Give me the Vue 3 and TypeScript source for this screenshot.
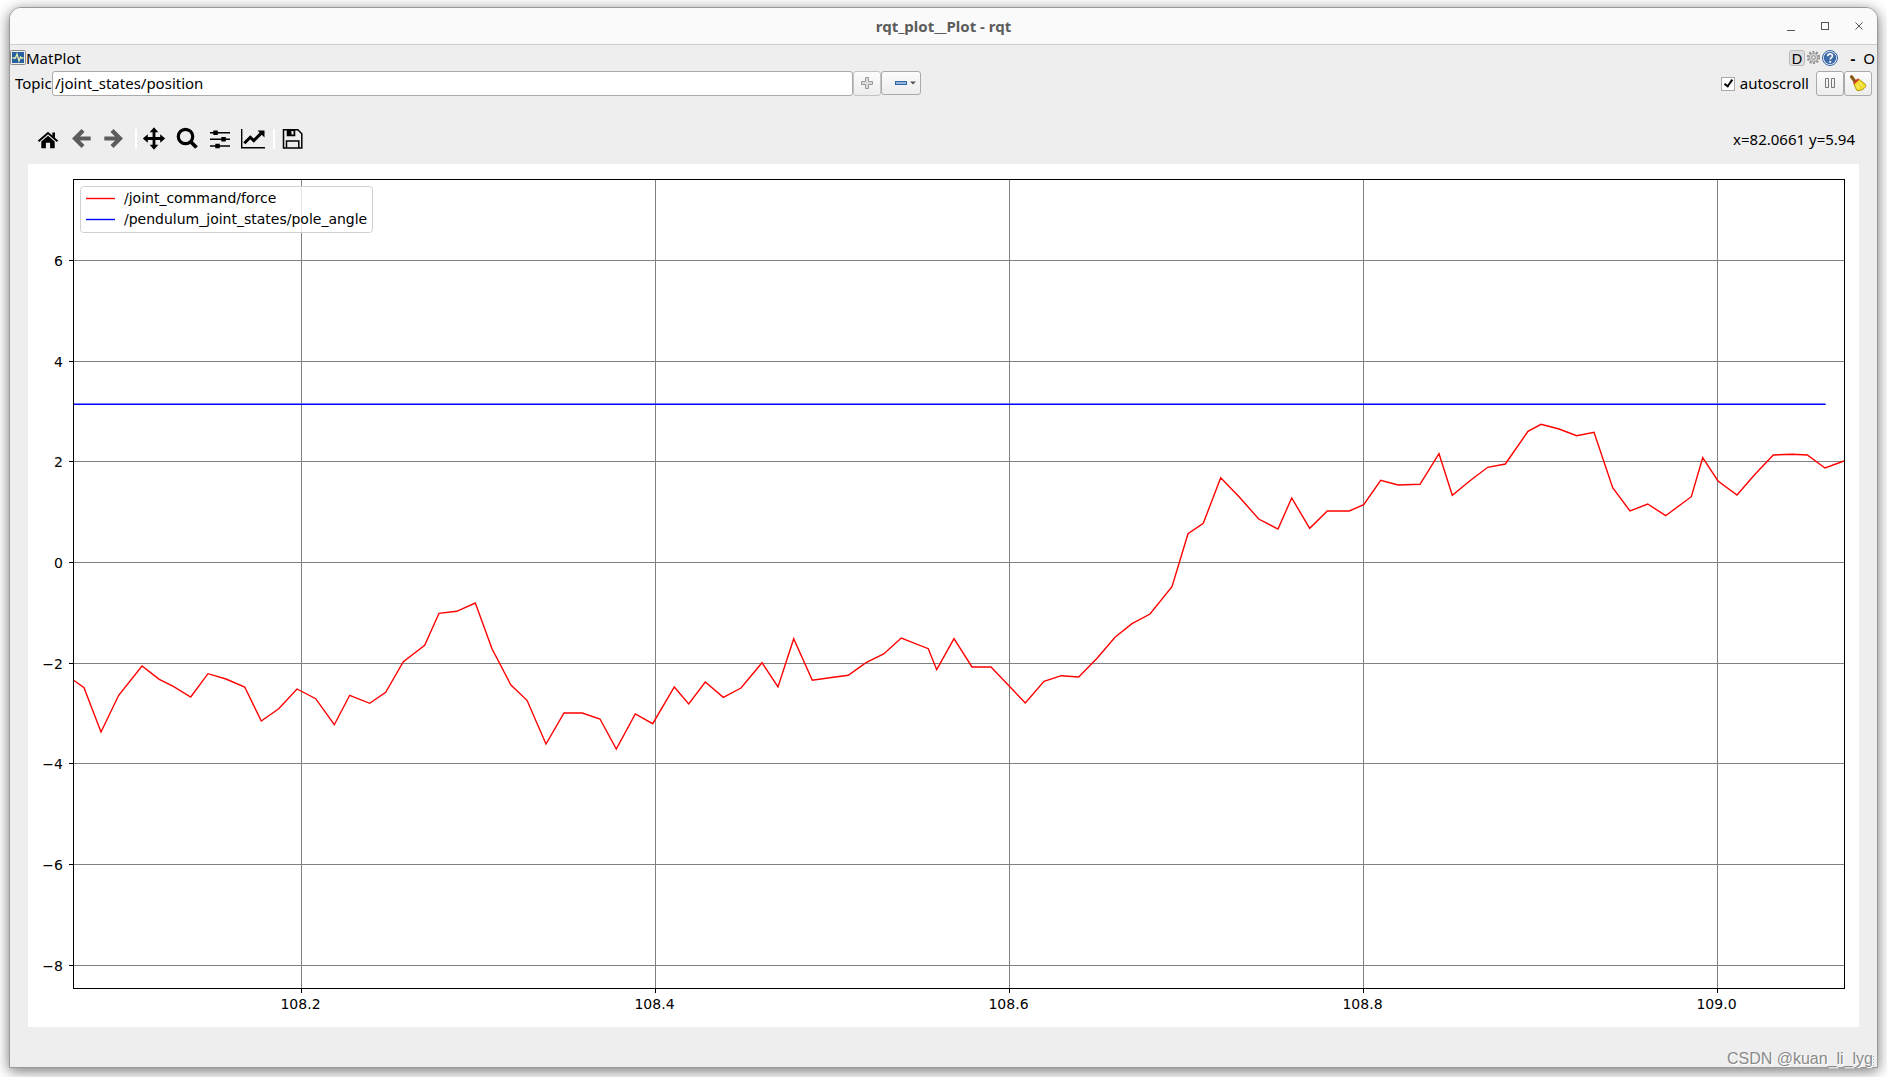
<script setup lang="ts">
import { ref } from 'vue'

interface Tick {
  label: string
  at: number
}

const topic = ref('/joint_states/position')
const autoscroll = ref(true)

const xTicks: Tick[] = ['108.2', '108.4', '108.6', '108.8', '109.0'].map((label, i) => ({
  label,
  at: 273.5 + i * 354,
}))

const yTicks: Tick[] = [
  { label: '6', at: 96.5 },
  { label: '4', at: 197.5 },
  { label: '2', at: 297.5 },
  { label: '0', at: 398.5 },
  { label: '−2', at: 499.5 },
  { label: '−4', at: 599.5 },
  { label: '−6', at: 700.5 },
  { label: '−8', at: 801.5 },
]

const force: [number, number][] = [
  [45.7, 516.3], [56, 523.7], [73, 568], [90.7, 531.3], [114, 502], [131.3, 515.3],
  [145.3, 522.3], [162.7, 533], [180, 509.7], [198, 515], [216.7, 523], [233.3, 557],
  [250.7, 544.7], [269, 525], [287.7, 534.7], [306.3, 560.7], [321.7, 531.3], [341.7, 539.3],
  [357.7, 528.3], [375.3, 497.7], [396.7, 481.3], [411, 449.3], [428.7, 447.3], [447.3, 439],
  [464, 484.7], [482.7, 520.7], [499, 536.3], [518, 580], [536, 549], [554.3, 549],
  [572, 555], [588.3, 585], [607.3, 550], [624.7, 559.7], [646.3, 523], [660.7, 540],
  [677.3, 518], [695.3, 533.3], [713, 524], [734, 498.7], [750, 523], [765.7, 474.7],
  [784.3, 516.3], [805.3, 513.3], [820.3, 511.3], [838, 498.7], [855.7, 490], [873.3, 474],
  [900.3, 484.7], [908.7, 505.7], [926, 474.7], [944, 503], [963, 503], [997.3, 539],
  [1016, 517.3], [1033.3, 511.7], [1050.7, 513], [1069.3, 494], [1087, 473.3], [1104, 459.7],
  [1122, 450], [1144, 422.7], [1160, 369.7], [1175.3, 359.3], [1192.7, 313.7], [1211.3, 333],
  [1230.7, 355], [1250, 365], [1263.7, 334], [1281.7, 364.3], [1299.3, 347], [1321.3, 347],
  [1335.7, 340.7], [1352.7, 316.3], [1370, 321], [1392, 320.3], [1411, 289.7], [1424.3, 331.3],
  [1442, 316.7], [1459.7, 303.3], [1477.3, 300], [1500, 267.3], [1513, 260.3], [1531, 265],
  [1548.7, 271.7], [1566, 268.3], [1584.7, 323.7], [1602, 347], [1619.7, 340], [1637.7, 351.7],
  [1663.3, 332.7], [1674.7, 293.7], [1690, 317], [1709, 331], [1727, 310.3], [1745.3, 291],
  [1764, 290.3], [1779.3, 291], [1797, 304], [1816, 297],
]
const forcePoints = force.map((p) => p.join(',')).join(' ')
</script>

<template>
  <div class="desktop">
    <main class="window">
      <header class="titlebar">
        <h1>rqt_plot__Plot - rqt</h1>
        <div class="window-buttons">
          <button type="button" aria-label="Minimize">
            <svg width="28" height="28"><path d="M10 18.5h8" /></svg>
          </button>
          <button type="button" aria-label="Maximize">
            <svg width="28" height="28"><rect x="10.5" y="10.5" width="7" height="7" /></svg>
          </button>
          <button type="button" aria-label="Close">
            <svg width="28" height="28"><path d="M10.500 10.500l7 7m0-7l-7 7" /></svg>
          </button>
        </div>
      </header>

      <div class="dock-title">
        <svg class="dock-icon" width="16" height="16">
          <rect x="0.500" y="0.500" width="15" height="14" rx="1" fill="#eee" stroke="#8a8a8a" />
          <rect x="2" y="2" width="12" height="11" fill="#27609e" />
          <path d="M2.500 8h3l1.500-4 2 7 1.500-4 1 1h2" fill="none" stroke="#e8f0b0" stroke-width="1.300" />
        </svg>
        <span>MatPlot</span>
        <div class="dock-actions">
          <button type="button" class="dock-d">D</button>
          <button type="button" class="dock-gear" aria-label="Configure">
            <svg width="15" height="16">
              <circle cx="7.500" cy="7.500" r="5.700" fill="none" stroke="#888" stroke-width="1.800" stroke-dasharray="2 1.580" />
              <circle cx="7.500" cy="7.500" r="4.300" fill="#d2d2d0" stroke="#999" />
              <circle cx="7.500" cy="7.500" r="1.800" fill="#eee" stroke="#888" />
            </svg>
          </button>
          <button type="button" class="dock-help" aria-label="Help">
            <svg width="16" height="16">
              <circle cx="8" cy="8" r="7.500" fill="#f4f7fb" stroke="#3465a4" />
              <circle cx="8" cy="8" r="6.200" fill="#3d6cab" />
              <path d="M5.700 6.200c0-3.200 4.800-3 4.700-.2 0 1.500-2.200 1.700-2.200 3.600" fill="none" stroke="#fff" stroke-width="1.700" />
              <circle cx="8.200" cy="11.800" r="1.100" fill="#fff" />
            </svg>
          </button>
          <button type="button" class="dock-min">-</button>
          <button type="button" class="dock-float">O</button>
        </div>
      </div>

      <div class="topic-row">
        <label class="topic-label" for="topic">Topic</label>
        <input id="topic" v-model="topic" class="topic-input" type="text" />
        <button type="button" class="tool faded" aria-label="Add topic">
          <svg width="26" height="23">
            <path d="M11.500 5.500h3v4h4v3h-4v4h-3v-4h-4v-3h4z" fill="#dcdcda" stroke="#999" />
          </svg>
        </button>
        <button type="button" class="tool remove" aria-label="Remove topic">
          <svg width="38" height="22">
            <rect x="13.500" y="9.500" width="11" height="3" fill="#8fb5dd" stroke="#3465a4" />
            <path d="M28 9.500h6l-3 3z" fill="#555" />
          </svg>
        </button>
        <label class="autoscroll">
          <input v-model="autoscroll" type="checkbox" />
          <span>autoscroll</span>
        </label>
        <button type="button" class="tool" aria-label="Pause">
          <svg width="26" height="23">
            <path d="M8.500 6.500h3v9h-3zM14.500 6.500h3v9h-3z" fill="#f4f4f4" stroke="#777" />
          </svg>
        </button>
        <button type="button" class="tool" aria-label="Clear plot">
          <svg width="26" height="23">
            <path d="M6.500 4.800l3 4" stroke="#8a5a14" stroke-width="3.200" stroke-linecap="round" />
            <path d="M9 11l5.500-3.500 6 5c.6 1.200 0 2.800-1.500 4-2 1.800-4.500 2.300-7 2-1.500-2-2.500-4.500-3-7.500z" fill="#f1dc2c" stroke="#b39a0c" />
            <path d="M14.500 10.500l3 4M12 12.500l1.500 4" stroke="#fff7a0" fill="none" />
            <path d="M8.500 11.500l5-4.500" stroke="#d23b24" stroke-width="1.800" />
          </svg>
        </button>
      </div>

      <div class="plot-toolbar">
        <button type="button" aria-label="Home">
          <svg width="33" height="33">
            <path d="M6.500 19.200L16 11l9.500 8.200" fill="none" stroke="#000" stroke-width="2" />
            <path d="M9.300 19.500L16 13.700l6.700 5.800v6.700h-4.600v-5.400h-4.200v5.400H9.300zM20.300 10.500h2.700v5.500l-2.700-2.300z" />
          </svg>
        </button>
        <button type="button" aria-label="Back">
          <svg width="33" height="33">
            <path d="M18 8.500l-8 8 8 8M11 16.500h14.700" fill="none" stroke="#5c5c5c" stroke-width="4.200" />
          </svg>
        </button>
        <button type="button" aria-label="Forward">
          <svg width="33" height="33">
            <path d="M14 8.500l8 8-8 8M21 16.500H6.300" fill="none" stroke="#5c5c5c" stroke-width="4.200" />
          </svg>
        </button>
        <i class="separator"></i>
        <button type="button" aria-label="Pan">
          <svg width="33" height="33">
            <path d="M17 8v17M8.500 16.500h17" stroke="#000" stroke-width="2.800" />
            <path d="M17 5.300l4.300 5h-8.600zM17 27.700l4.300-5h-8.600zM5.800 16.500l5-4.300v8.600zM28.200 16.500l-5-4.300v8.600z" />
          </svg>
        </button>
        <button type="button" aria-label="Zoom">
          <svg width="33" height="33">
            <circle cx="15.500" cy="14.500" r="7.200" fill="none" stroke="#000" stroke-width="3.200" />
            <path d="M20.500 19.500l6 6" stroke="#000" stroke-width="3.800" />
          </svg>
        </button>
        <button type="button" aria-label="Configure subplots">
          <svg width="33" height="33">
            <path d="M7 10.700h20M7 17.300h20M7 24h20" stroke="#000" stroke-width="1.600" />
            <path d="M10.300 8.500h4.500v4.500h-4.500zM18.300 15h4.500v4.500h-4.500zM12.300 21.700h4.500v4.500h-4.500z" />
          </svg>
        </button>
        <button type="button" aria-label="Edit axes">
          <svg width="33" height="33">
            <path d="M5.700 7v18.700H29" fill="none" stroke="#000" stroke-width="1.400" />
            <path d="M8.300 21.300l6-6 3.500 3.300 8-8" fill="none" stroke="#000" stroke-width="3" />
            <path d="M21.500 8.500h7v7z" />
          </svg>
        </button>
        <i class="separator"></i>
        <button type="button" aria-label="Save">
          <svg width="33" height="33">
            <path d="M8.500 7.700h14.300l4 4v14.200H8.500zM11.500 26v-7h12.300v7" fill="none" stroke="#000" stroke-width="1.500" />
            <path d="M11.700 7.500h8.600v6.700h-8.600z" />
            <path d="M16.500 9h2v3.500h-2z" fill="#eee" />
          </svg>
        </button>
        <output class="coords">x=82.0661 y=5.94</output>
      </div>

      <svg class="canvas" viewBox="0 0 1831 863" role="img" aria-label="Plot">
        <g class="grid">
          <path v-for="t in xTicks" :key="t.label" :d="`M${t.at} 15V824`" />
          <path v-for="t in yTicks" :key="t.label" :d="`M45 ${t.at}H1816`" />
        </g>
        <path d="M45.500 240.250H1797.700" class="line blue" />
        <polyline :points="forcePoints" class="line red" />
        <rect class="frame" x="45.500" y="15.500" width="1771" height="809" />
        <g class="ticks">
          <path v-for="t in xTicks" :key="t.label" :d="`M${t.at} 825v4`" />
          <path v-for="t in yTicks" :key="t.label" :d="`M45 ${t.at}h-4`" />
        </g>
        <text v-for="t in xTicks" :key="t.label" :x="t.at - 1" y="845" text-anchor="middle">{{ t.label }}</text>
        <text v-for="t in yTicks" :key="t.label" x="35" :y="t.at + 5" text-anchor="end">{{ t.label }}</text>
        <g>
          <rect class="legend" x="52.500" y="22.500" width="292" height="46" rx="3" />
          <path d="M58 34.500h29" class="line red" />
          <path d="M58 55.500h29" class="line blue" />
          <text x="96" y="39">/joint_command/force</text>
          <text x="96" y="60">/pendulum_joint_states/pole_angle</text>
        </g>
      </svg>

      <footer class="statusbar">
        <span class="watermark">CSDN @kuan_li_lyg</span>
        <svg class="grip" width="8" height="14">
          <path d="M1.500 3v11M4.500 3v11" stroke="#aaa" stroke-dasharray="1 2" />
        </svg>
      </footer>
    </main>
  </div>
</template>

<style>
body {
  margin: 0;
  background: #fff;
}
</style>

<style scoped>
.desktop {
  box-sizing: border-box;
  padding: 7px 9px 9px;
  overflow: hidden;
  font-family: "Noto Sans", sans-serif;
  font-size: 15px;
  line-height: 20px;
  color: #000;
}
.window {
  border: 1px solid #999;
  border-radius: 12px 12px 0 0;
  background: #eee;
  box-shadow: 0 3px 14px rgba(0, 0, 0, 0.55);
}
button {
  padding: 0;
  border: 0;
  background: none;
  font: inherit;
  color: inherit;
}
svg {
  display: block;
}
.titlebar {
  display: grid;
  grid-template-columns: 1fr auto 1fr;
  align-items: center;
  height: 36px;
  border-bottom: 1px solid #cfcfcf;
  border-radius: 11px 11px 0 0;
  background: #fafafa;
}
.titlebar h1 {
  grid-column: 2;
  margin: 0;
  font-size: 15px;
  font-weight: 700;
  color: #5c5c5c;
}
.window-buttons {
  display: flex;
  justify-content: flex-end;
  gap: 6px;
  padding-right: 4px;
}
.window-buttons svg {
  fill: none;
  stroke: #555;
}
.dock-title {
  display: flex;
  align-items: center;
  height: 26px;
}
.dock-actions {
  display: flex;
  align-items: center;
  margin-left: auto;
  padding-right: 2px;
}
.dock-d {
  box-sizing: border-box;
  width: 16px;
  height: 16px;
  border: 1px solid #bbb;
  border-radius: 3px;
  background: #dedede;
  line-height: 15px;
}
.dock-gear {
  margin: 0 1px;
}
.dock-min {
  width: 10px;
  margin-left: 10px;
  font-weight: 700;
}
.dock-float {
  width: 12px;
  margin-left: 5px;
}
.topic-row {
  display: flex;
  align-items: flex-start;
  height: 25px;
  padding-right: 5px;
  line-height: 25px;
}
.topic-label {
  flex: 0 0 37px;
  padding-left: 5px;
}
.topic-input {
  box-sizing: border-box;
  width: 43%;
  height: 25px;
  padding: 0 2px;
  border: 1px solid #aaa;
  border-radius: 3px;
  background: #fff;
  font: inherit;
  color: inherit;
}
.tool {
  border: 1px solid #aaa;
  border-radius: 3px;
  background: linear-gradient(#fcfcfc, #ededed);
}
.faded {
  border-color: #c4c4c4;
}
.autoscroll {
  display: flex;
  align-items: center;
  gap: 5px;
  margin: 0 7px 0 auto;
}
.autoscroll input {
  appearance: none;
  box-sizing: border-box;
  width: 14px;
  height: 14px;
  margin: 0;
  border: 1px solid #aaa;
  background: #fff;
}
.autoscroll input:checked::after {
  content: "";
  display: block;
  width: 3px;
  height: 7px;
  margin: 0 0 0 4px;
  border: solid #000;
  border-width: 0 2px 2px 0;
  transform: rotate(35deg);
}
.plot-toolbar {
  display: flex;
  align-items: center;
  margin: 26px 18px 9px;
  padding: 0 4px;
}
.separator {
  box-sizing: border-box;
  width: 6px;
  height: 20px;
  border-right: 2px solid #fff;
}
.coords {
  margin-left: auto;
}
.canvas {
  box-sizing: border-box;
  width: calc(100% - 36px);
  height: auto;
  margin: 0 18px;
  background: #fff;
  font-family: "DejaVu Sans", sans-serif;
  font-size: 14px;
}
.grid path {
  stroke: #808080;
}
.ticks path {
  stroke: #000;
}
.frame {
  fill: none;
  stroke: #000;
}
.line {
  fill: none;
  stroke-width: 1.4px;
}
.red {
  stroke: #f00;
}
.blue {
  stroke: #00f;
}
.legend {
  fill: rgba(255, 255, 255, 0.8);
  stroke: #d0d0d0;
}
.statusbar {
  display: flex;
  align-items: flex-end;
  justify-content: flex-end;
  height: 40px;
}
.watermark {
  margin-right: -4px;
  font-family: "Liberation Sans", sans-serif;
  font-size: 16px;
  line-height: 16px;
  color: #8a8a8a;
  text-shadow: 1px 1px 0 #fff;
}
</style>
